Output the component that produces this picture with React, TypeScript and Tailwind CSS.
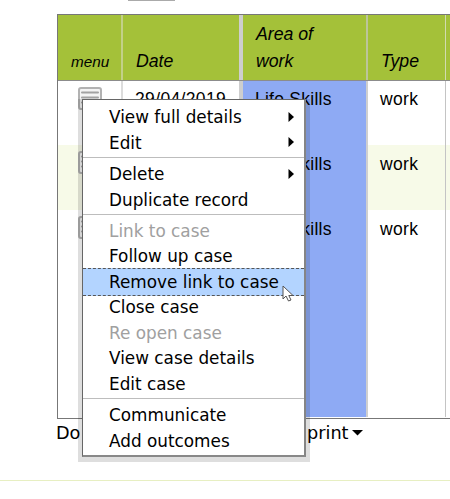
import React from "react";

const SANS = "font-['Liberation_Sans',Arial,sans-serif]";
const MENU = "font-['DejaVu_Sans',Verdana,sans-serif]";

function RowIcon() {
  return (
    <svg width="24" height="24" viewBox="0 0 24 24" className="block" fill="none">
      <rect x="1" y="1" width="22" height="21" rx="2" fill="#f4f4f4" stroke="#b2b2b2" strokeWidth="2" />
      <path d="M4 5.5H20M4 10.5H20M4 15.5H20" stroke="#a2a2a2" strokeWidth="2" strokeLinecap="round" />
    </svg>
  );
}

const rows = [
  { date: "29/04/2019", tint: "bg-white", h: "h-[64px] leading-[20px]" },
  { date: "", tint: "bg-[#f7fae8]", h: "h-[65px] leading-[22px]" },
  { date: "", tint: "bg-white", h: "h-[207px] leading-[22px]" },
];

type Item = { label: string; arrow?: boolean; disabled?: boolean; active?: boolean };

const groups: Item[][] = [
  [{ label: "View full details", arrow: true }, { label: "Edit", arrow: true }],
  [{ label: "Delete", arrow: true }, { label: "Duplicate record" }],
  [
    { label: "Link to case", disabled: true },
    { label: "Follow up case" },
    { label: "Remove link to case", active: true },
    { label: "Close case" },
    { label: "Re open case", disabled: true },
    { label: "View case details" },
    { label: "Edit case" },
  ],
  [{ label: "Communicate" }, { label: "Add outcomes" }],
];

const cols = "grid grid-cols-[63px_122px_125px_78px_1fr]";

function ContextMenu() {
  return (
    <div className="absolute left-[78px] top-[99px] h-[363px] w-[232px] bg-black/[0.13] px-1">
      <div className={`h-[358px] border border-[#666] border-r-2 border-b-2 border-r-[#858585] border-b-[#888] bg-white pt-[5px] text-[16.85px] text-black ${MENU}`}>
        {groups.map((group, g) => (
          <div key={g} className={g ? "mt-[1px] border-t border-[#bdbdbd] pt-[3.75px]" : ""}>
            {group.map((item) => (
              <div
                key={item.label}
                className={`relative flex h-[25.5px] items-center justify-between whitespace-nowrap pl-[26px] pr-[10px] leading-none ${
                  item.disabled ? "text-[#a0a0a0]" : ""
                }`}
              >
                {item.active && (
                  <span className="absolute inset-x-0 -top-[2px] h-[28px] border-y border-dashed border-[#555] bg-[#b3d4ff]" />
                )}
                <span className="relative">{item.label}</span>
                {item.arrow && (
                  <svg width="6" height="10" viewBox="0 0 6 10" className="relative -top-px">
                    <path d="M0.5 0L6 5L0.5 10Z" fill="black" />
                  </svg>
                )}
              </div>
            ))}
          </div>
        ))}
      </div>
    </div>
  );
}

export default function App() {
  return (
    <div className={`relative h-[499px] w-[450px] overflow-hidden bg-white text-[17.5px] text-black ${SANS}`}>
      <div className="ml-[128px] h-px w-[47px] bg-[#aaa]" />
      <div className="ml-[57px] mt-[13px] h-[405px] border-y border-l border-[#777]">
        <div className={`${cols} h-[66px] items-stretch border-b border-[#8c8c8c] bg-[#a4c139] text-[17.7px] italic leading-[27px]`}>
          <div className="flex items-end pb-[5px] pl-[13px] text-[15.3px]">menu</div>
          <div className="flex items-end border-l-2 border-r-4 border-l-[#c3d089] border-r-[#cecece] pb-[5px] pl-[13px]">Date</div>
          <div className="flex items-end border-r-2 border-[#bcc59b] pb-[5px] pl-[13px]">Area of<br />work</div>
          <div className="flex items-end border-r border-[#d2dbb0] pb-[5px] pl-[13px]">Type</div>
          <div />
        </div>
        {rows.map((row, i) => (
          <div key={i} className={`${cols} ${row.h} ${row.tint}`}>
            <div className="pl-[20px] pt-[6px]"><RowIcon /></div>
            <div className="border-l-2 border-r-4 border-l-[#dcdcdc] border-r-[#cecece] pl-[12px] pt-[8px] tracking-[0.35px]">{row.date}</div>
            <div className="whitespace-nowrap border-r-2 border-[#cfcfcf] bg-[#8eaaf4] pl-[12px] pt-[8px] tracking-[0.25px]">Life Skills</div>
            <div className="border-r border-[#c4c4c4] pl-[12px] pt-[8px] tracking-[0.35px]">work</div>
            <div />
          </div>
        ))}
      </div>
      <div className={`flex h-[28px] items-center pl-[56px] text-[17.7px] ${MENU}`}>
        <span className="w-[251px] whitespace-nowrap">Do</span>
        <span>print</span>
        <svg width="11" height="6" viewBox="0 0 11 6" className="ml-[3px]">
          <path d="M0 0H11L5.5 5.5Z" fill="black" />
        </svg>
      </div>
      <div className="mt-[33px] h-px bg-[#e7efc2]" />
      <ContextMenu />
      <svg width="12" height="18" viewBox="0 0 12 18" className="absolute left-[282px] top-[285px]">
        <path d="M1 1V14L4 11L6.5 16L9 15L6.8 10.5H11Z" fill="white" stroke="#555" strokeWidth="1" />
      </svg>
    </div>
  );
}
